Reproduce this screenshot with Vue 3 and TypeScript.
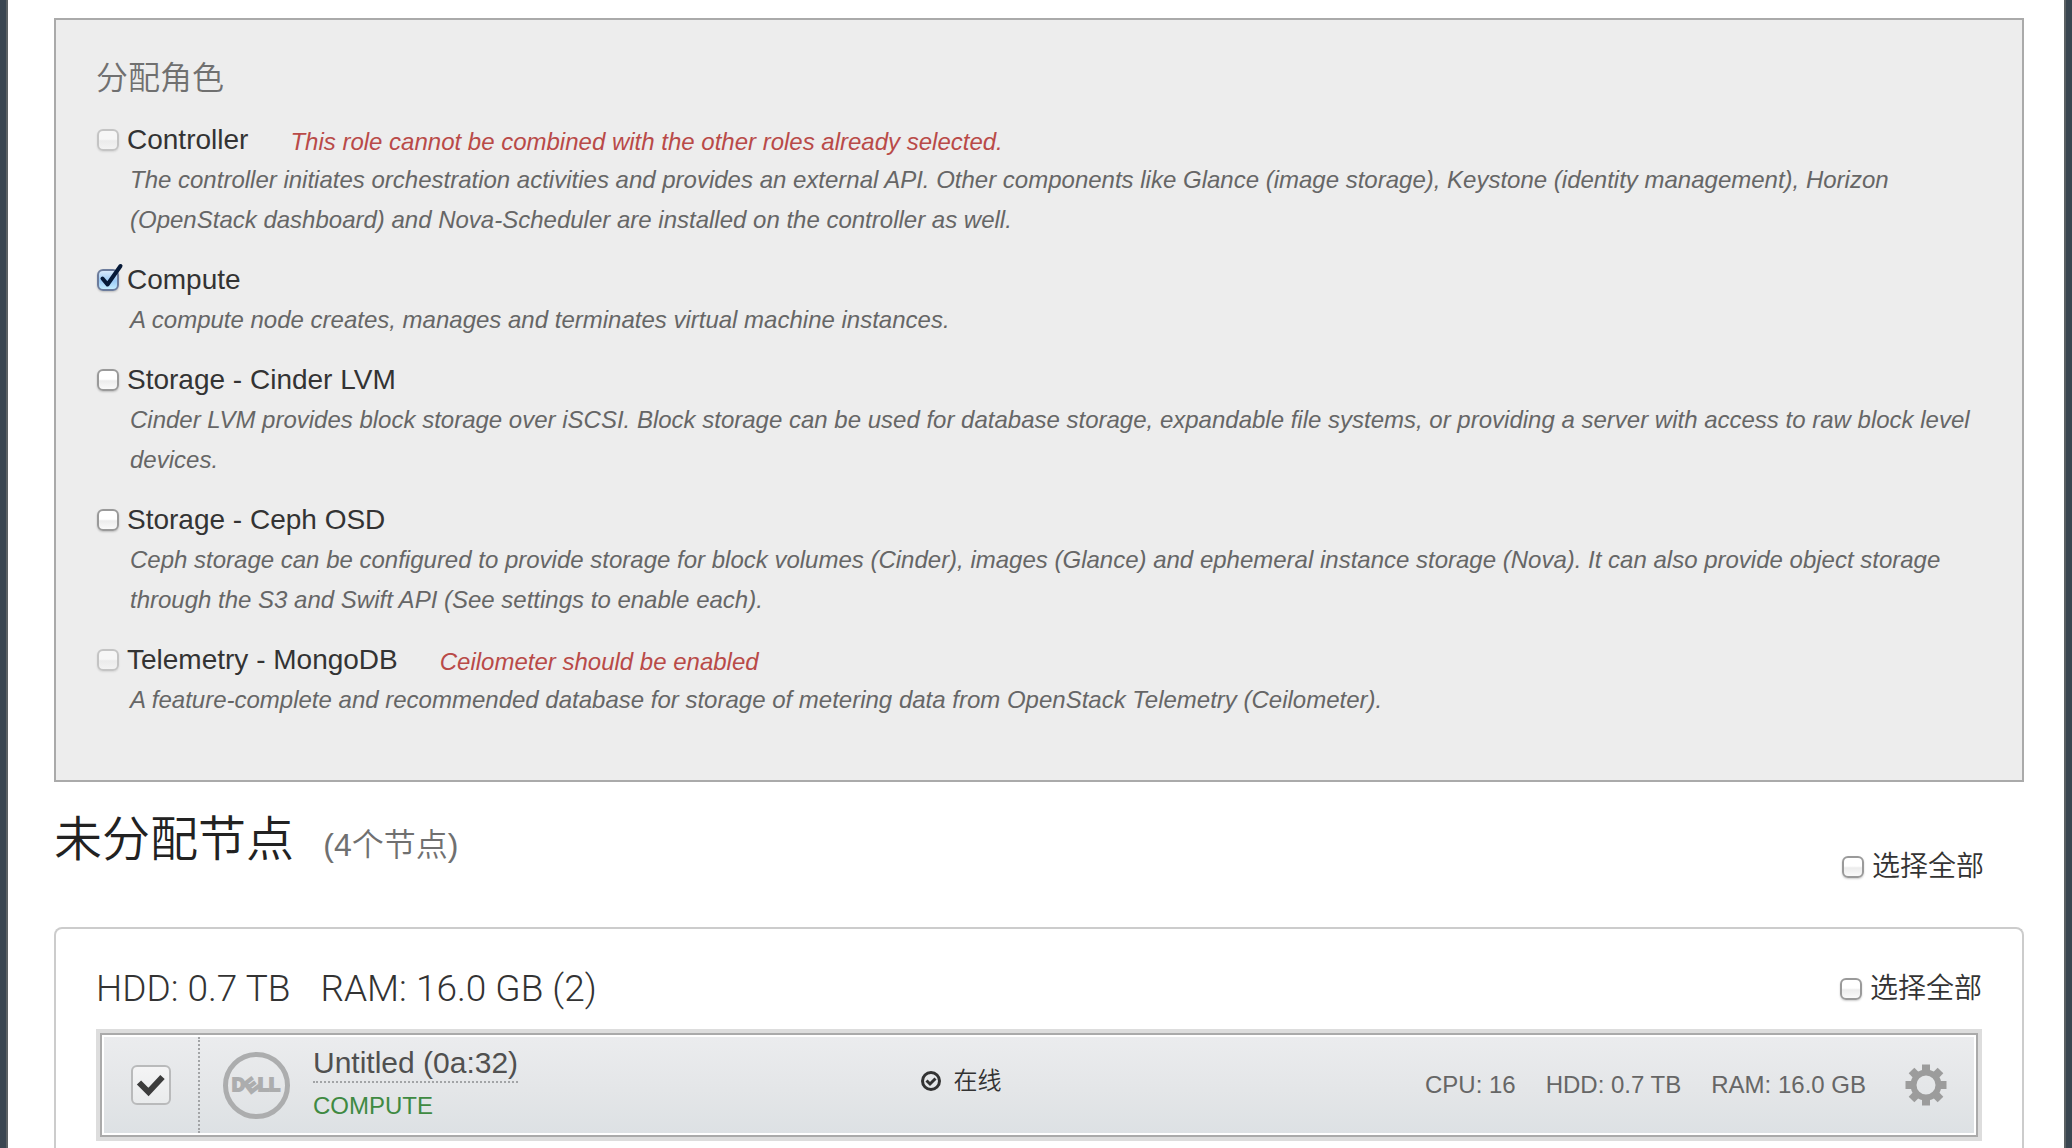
<script setup lang="ts">
import { ref } from 'vue'

interface Role {
  id: string
  label: string
  description: string
  checked: boolean
  disabled: boolean
  conflict?: string
}

interface ClusterNode {
  id: string
  name: string
  role: string
  status: string
  specs: string[]
  checked: boolean
}

const roles = ref<Role[]>([
  {
    id: 'controller',
    label: 'Controller',
    description:
      'The controller initiates orchestration activities and provides an external API. Other components like Glance (image storage), Keystone (identity management), Horizon (OpenStack dashboard) and Nova-Scheduler are installed on the controller as well.',
    checked: false,
    disabled: true,
    conflict: 'This role cannot be combined with the other roles already selected.',
  },
  {
    id: 'compute',
    label: 'Compute',
    description: 'A compute node creates, manages and terminates virtual machine instances.',
    checked: true,
    disabled: false,
  },
  {
    id: 'cinder',
    label: 'Storage - Cinder LVM',
    description:
      'Cinder LVM provides block storage over iSCSI. Block storage can be used for database storage, expandable file systems, or providing a server with access to raw block level devices.',
    checked: false,
    disabled: false,
  },
  {
    id: 'ceph-osd',
    label: 'Storage - Ceph OSD',
    description:
      'Ceph storage can be configured to provide storage for block volumes (Cinder), images (Glance) and ephemeral instance storage (Nova). It can also provide object storage through the S3 and Swift API (See settings to enable each).',
    checked: false,
    disabled: false,
  },
  {
    id: 'mongo',
    label: 'Telemetry - MongoDB',
    description:
      'A feature-complete and recommended database for storage of metering data from OpenStack Telemetry (Ceilometer).',
    checked: false,
    disabled: true,
    conflict: 'Ceilometer should be enabled',
  },
])

const nodes = ref<ClusterNode[]>([
  {
    id: 'node-0a32',
    name: 'Untitled (0a:32)',
    role: 'COMPUTE',
    status: '在线',
    specs: ['CPU: 16', 'HDD: 0.7 TB', 'RAM: 16.0 GB'],
    checked: true,
  },
])

const allSelected = ref(false)
const groupSelected = ref(false)
const gearAngles = [0, 45, 90, 135, 180, 225, 270, 315]
</script>

<template>
  <div class="backdrop">
    <main class="page">
      <section class="roles">
        <h4 class="roles-title">分配角色</h4>
        <div v-for="role in roles" :key="role.id" class="role">
          <div class="role-head">
            <label class="choice">
              <span class="tick">
                <input v-model="role.checked" class="box" type="checkbox" :disabled="role.disabled" />
                <svg v-if="role.checked" class="tick-mark" viewBox="0 0 28 28" aria-hidden="true">
                  <path d="M6.500 15.500 L11.500 21.500 L24.500 3" />
                </svg>
              </span>
              <span>{{ role.label }}</span>
            </label>
            <span v-if="role.conflict" class="conflict">{{ role.conflict }}</span>
          </div>
          <p class="role-text">{{ role.description }}</p>
        </div>
      </section>

      <header class="summary">
        <h2 class="summary-title">未分配节点 <small class="summary-count">(4个节点)</small></h2>
        <label class="choice">
          <span class="tick"><input v-model="allSelected" class="box" type="checkbox" /></span>
          <span>选择全部</span>
        </label>
      </header>

      <section class="group">
        <header class="group-head">
          <h3 class="group-title"><span>HDD: 0.7 TB</span><span>RAM: 16.0 GB (2)</span></h3>
          <label class="choice">
            <span class="tick"><input v-model="groupSelected" class="box" type="checkbox" /></span>
            <span>选择全部</span>
          </label>
        </header>

        <article v-for="node in nodes" :key="node.id" class="node">
          <label class="node-select">
            <input v-model="node.checked" class="node-box" type="checkbox" :aria-label="node.name" />
            <svg v-if="node.checked" class="node-mark" viewBox="0 0 40 40" aria-hidden="true">
              <path d="M8 17.500 L17.500 27 L31.500 12" />
            </svg>
          </label>

          <svg class="vendor" viewBox="0 0 67 67" role="img" aria-label="DELL">
            <circle cx="33.500" cy="33.500" r="31" />
            <text y="39">
              <tspan x="9">D</tspan>
              <tspan x="35 46">LL</tspan>
            </text>
            <text transform="rotate(-38 29 33)" x="22" y="39">E</text>
          </svg>

          <div class="identity">
            <button type="button" class="node-name">{{ node.name }}</button>
            <div class="node-role">{{ node.role }}</div>
          </div>

          <div class="status">
            <svg class="status-icon" viewBox="0 0 22 22" aria-hidden="true">
              <circle cx="11" cy="11" r="8.500" />
              <path d="M6.500 10.500 L10 14 L15.500 8.500" />
            </svg>
            <span>{{ node.status }}</span>
          </div>

          <div class="specs">
            <span v-for="spec in node.specs" :key="spec">{{ spec }}</span>
          </div>

          <button type="button" class="settings" aria-label="Settings">
            <svg viewBox="-21 -21 42 42" aria-hidden="true">
              <circle r="12.500" class="gear-ring" />
              <path
                v-for="angle in gearAngles"
                :key="angle"
                d="M-4 -20.500 H4 V-14 H-4 Z"
                :transform="`rotate(${angle})`"
              />
            </svg>
          </button>
        </article>
      </section>
    </main>
  </div>
</template>

<style>
body {
  margin: 0;
  background: #3a4651;
}
</style>

<style scoped>
.backdrop {
  box-sizing: border-box;
  min-height: 100vh;
  padding: 0 6px;
  display: flex;
  background: #3a4651;
  font-family: 'Liberation Sans', Arial, 'Noto Sans CJK SC', sans-serif;
  font-size: 28px;
  line-height: 40px;
  color: #333;
}

.page {
  flex: 1;
  min-width: 0;
  display: flex;
  flex-direction: column;
  padding: 18px 40px 0 46px;
  border: solid #5c6164;
  border-width: 0 2px;
  background: #fff;
}

h2,
h3,
h4,
p {
  margin: 0;
}

.roles {
  padding: 38px 40px 40px;
  border: 2px solid #aaa;
  background: #ededed;
}

.roles-title {
  margin-bottom: 22px;
  font-size: 32px;
  font-weight: 350;
  color: #707070;
}

.role {
  margin-bottom: 20px;
}

.role-head {
  display: flex;
  gap: 42px;
}

.choice {
  display: flex;
  align-items: center;
  gap: 7px;
  font-weight: 350;
}

.tick {
  position: relative;
  display: flex;
  padding: 0 1px;
}

.box {
  appearance: none;
  box-sizing: border-box;
  width: 22px;
  height: 22px;
  margin: 0;
  border: 2px solid #9a9a9a;
  border-radius: 6px;
  background: linear-gradient(#fff 45%, #ececec 55%, #fafafa);
  box-shadow: 0 1px 2px rgba(0, 0, 0, 0.2);
}

.box:disabled {
  border-color: #c4c4c4;
  background: linear-gradient(#f6f6f6 45%, #ebebeb 55%, #f3f3f3);
  box-shadow: 0 1px 2px rgba(0, 0, 0, 0.1);
}

.box:checked {
  border-color: #6c7c9c;
  background: linear-gradient(#d8e9fa, #9ccaf5 55%, #c4ecff);
}

.tick-mark {
  position: absolute;
  left: 0;
  bottom: 0;
  width: 28px;
  height: 28px;
  fill: none;
  stroke: #071a38;
  stroke-width: 4;
  stroke-linecap: round;
  stroke-linejoin: round;
}

.conflict {
  padding-top: 4px;
  font-size: 24px;
  line-height: 36px;
  font-style: italic;
  color: #b94a48;
}

.role-text {
  padding-left: 34px;
  font-size: 24px;
  font-style: italic;
  color: #666;
}

.summary {
  display: flex;
  justify-content: space-between;
  align-items: flex-end;
  margin: 28px 0 40px;
  padding-right: 40px;
}

.summary-title {
  padding-bottom: 17px;
  font-size: 48px;
  font-weight: 350;
  line-height: 60px;
  color: #222;
}

.summary-count {
  margin-left: 16px;
  font-size: 32px;
  line-height: 32px;
  color: #707070;
}

.group {
  flex: 1;
  padding: 40px 40px 0;
  border: solid #ccc;
  border-width: 2px 2px 0;
  border-radius: 8px 8px 0 0;
}

.group-head {
  display: flex;
  justify-content: space-between;
}

.group-title {
  display: flex;
  gap: 30px;
  font-family: Roboto, 'Liberation Sans', sans-serif;
  font-size: 37px;
  font-weight: 300;
}

.node {
  display: grid;
  grid-template-columns: 96px 113px 6fr 5fr auto auto;
  align-items: center;
  height: 96px;
  margin: 24px 4px 4px;
  padding: 2px;
  border: 2px solid #aaa;
  background: linear-gradient(#ebecee, #e4e6e8 55%, #dde1e4) content-box, #fff;
  box-shadow: 0 0 0 4px #ddd;
  font-size: 24px;
}

.node-select {
  position: relative;
  align-self: stretch;
  display: grid;
  place-items: center;
  border-right: 2px dotted #a2a4a6;
}

.node-box,
.node-mark {
  grid-area: 1 / 1;
  width: 40px;
  height: 40px;
}

.node-box {
  appearance: none;
  box-sizing: border-box;
  margin: 0;
  border: 2px solid #b9babb;
  border-radius: 6px;
  background: linear-gradient(#f4f4f5, #e9ebec);
}

.node-mark {
  pointer-events: none;
  z-index: 1;
  fill: none;
  stroke: #3c3c3c;
  stroke-width: 6;
}

.vendor {
  justify-self: center;
  width: 67px;
  height: 67px;
}

.vendor circle {
  fill: none;
  stroke: #acadae;
  stroke-width: 5;
}

.vendor text {
  font-family: 'Liberation Sans', Arial, sans-serif;
  font-size: 18px;
  font-weight: 700;
  fill: #acadae;
  stroke: #acadae;
  stroke-width: 2;
}

.identity {
  display: flex;
  flex-direction: column;
  align-items: flex-start;
  gap: 3px;
}

button {
  padding: 0;
  border: 0;
  background: none;
  font: inherit;
  cursor: pointer;
}

.node-name {
  border-bottom: 2px dotted #a2a4a6;
  font-size: 30px;
  line-height: 36px;
  color: #505050;
}

.node-role {
  color: #3f8a42;
}

.status {
  display: flex;
  align-items: center;
  gap: 12px;
  padding-bottom: 8px;
  font-weight: 350;
}

.status-icon {
  width: 22px;
  height: 22px;
  fill: none;
  stroke: #333;
  stroke-width: 3;
}

.specs {
  display: flex;
  gap: 30px;
  color: #666;
}

.settings {
  display: flex;
  margin: 0 27px 0 39px;
}

.settings svg {
  width: 42px;
  height: 42px;
  fill: #9c9c9c;
}

.settings .gear-ring {
  fill: none;
  stroke: #9c9c9c;
  stroke-width: 6;
}
</style>
